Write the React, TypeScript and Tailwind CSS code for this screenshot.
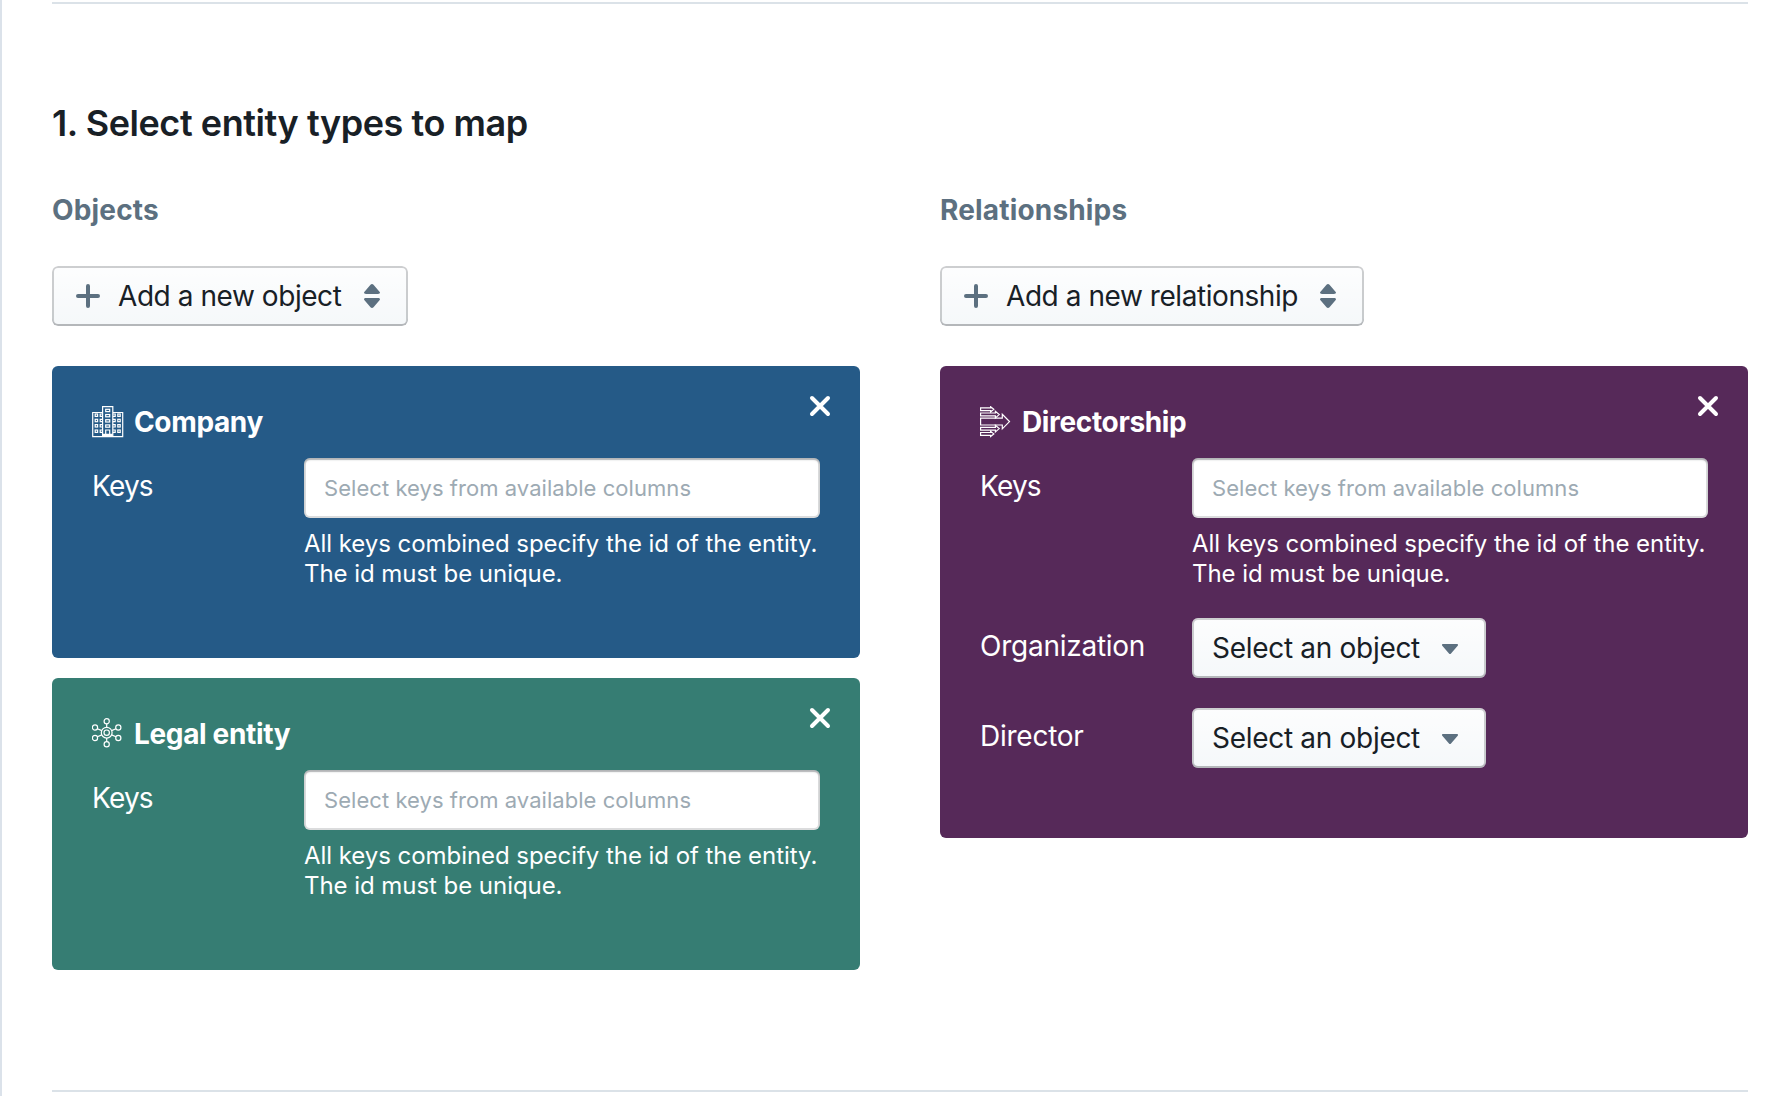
import type { ReactNode } from "react";

const buttonLook =
  "flex h-[60px] items-center rounded-[6px] bg-[#f5f8fa] bg-linear-to-b from-white/80 to-white/0 text-[28px] leading-[36px] text-[#182026] shadow-[inset_0_0_0_2px_rgba(16,22,26,0.2),inset_0_-2px_0_rgba(16,22,26,0.1)]";

function PlusIcon() {
  return (
    <svg className="h-8 w-8 shrink-0" viewBox="0 0 32 32" fill="none" stroke="#5c7080" strokeWidth="4" strokeLinecap="round">
      <path d="M16 6v20M6 16h20" />
    </svg>
  );
}

function DoubleCaretIcon() {
  return (
    <svg className="h-8 w-8 shrink-0" viewBox="0 0 32 32" fill="#5c7080">
      <path d="M10 14h12c1.1 0 2-.5 2-1.2 0-.4-.2-.8-.5-1.1l-6-7c-.8-.9-2.2-.9-3 0l-6 7c-.3.3-.5.7-.5 1.1 0 .7.9 1.2 2 1.2zM10 18h12c1.1 0 2 .5 2 1.2 0 .4-.2.8-.5 1.1l-6 7c-.8.9-2.2.9-3 0l-6-7c-.3-.3-.5-.7-.5-1.1 0-.7.9-1.2 2-1.2z" />
    </svg>
  );
}

function CaretDownIcon() {
  return (
    <svg className="h-8 w-8 shrink-0" viewBox="0 0 32 32" fill="#5c7080">
      <path d="M24 13c0-.6-.5-1-1-1H9c-.6 0-1 .4-1 1 0 .3.1.5.3.7l6.9 8c.2.2.5.4.8.4s.6-.2.8-.4l6.9-8c.2-.2.3-.4.3-.7z" />
    </svg>
  );
}

function BuildingIcon() {
  const rows = [8, 13.3, 18.6, 24];
  return (
    <svg className="h-8 w-8 shrink-0" viewBox="0 0 32 32" fill="none" stroke="white" strokeWidth="1.2">
      <path d="M10.6 6.5H.7v24.200h30V6.500h-9.900M10.600 30.700V.7h10.200v30" />
      {rows.map((y) => (
        <g key={y}>
          <rect x="3.200" y={y} width="2.400" height="2.400" />
          <path d={`M10.600 ${y}H8.200v2.400h2.400M20.800 ${y}h2.400v2.400h-2.400`} />
          <rect x="25.800" y={y} width="2.400" height="2.400" />
        </g>
      ))}
      <rect x="13.700" y="3.300" width="4" height="2.300" />
      <rect x="13.700" y="8.500" width="4" height="2.300" />
      <rect x="13.700" y="13.700" width="4" height="2.300" />
      <rect x="13.700" y="18.900" width="4" height="2.300" />
      <path d="M13.700 28v-4h4v4M10.600 28.300h10.200M10.600 29.600h10.200" />
    </svg>
  );
}

function NetworkIcon() {
  const nodes = [
    [14.7, 3.2],
    [26.3, 9.5],
    [26.3, 20],
    [14.7, 26.3],
    [3, 20],
    [3, 9.5],
  ];
  return (
    <svg className="h-8 w-8 shrink-0" viewBox="0 0 32 32" fill="none" stroke="white" strokeWidth="1.2">
      <circle cx="14.7" cy="14.7" r="5.4" />
      <circle cx="14.7" cy="14.7" r="2.7" />
      {nodes.map(([x, y]) => (
        <circle key={`${x}-${y}`} cx={x} cy={y} r="2.6" />
      ))}
      <path d="M14.7 5.800v3.500M14.700 20.100v3.600M24 10.700l-4.400 1.900M24 18.800l-4.400-1.900M5.400 10.700l4.400 1.900M5.400 18.800l4.400-1.900" />
    </svg>
  );
}

function ArrowsIcon() {
  return (
    <svg className="h-8 w-8 shrink-0" viewBox="0 0 32 32" fill="none" stroke="white" strokeWidth="1.2">
      <path d="M.6 12.200h21.700V8.300l7.200 7.300-7.200 7.300v-3.900H.6z" />
      <path d="M.6 1.900h10V.700l3.200 2.600-3.200 2.600V4.700H.6z" />
      <path d="M.6 7h14.800V5.300l3.800 3.300-3.800 3.300V9.800H.6z" />
      <path d="M.6 21.400h14.800v-2.100l3.800 3.300-3.800 3.300v-1.700H.6z" />
      <path d="M.6 26.500h10v-1.200l3.200 2.600-3.200 2.600v-1.200H.6z" />
    </svg>
  );
}

function CloseButton() {
  return (
    <button aria-label="Remove" className="absolute top-6 right-6 flex h-8 w-8 items-center justify-center">
      <svg className="h-8 w-8" viewBox="0 0 32 32" fill="none" stroke="white" strokeWidth="4" strokeLinecap="round">
        <path d="M8 8l16 16M24 8L8 24" />
      </svg>
    </button>
  );
}

function AddButton({ label, size }: { label: string; size: string }) {
  return (
    <button className={`${buttonLook} ${size} justify-between px-[20px]`}>
      <PlusIcon />
      <span className="ml-[14px] flex-1 text-left tracking-[-0.44px] whitespace-nowrap">{label}</span>
      <DoubleCaretIcon />
    </button>
  );
}

function Row({ label, tracking, children }: { label: string; tracking: string; children: ReactNode }) {
  return (
    <div className="mb-[30px] flex items-start">
      <div className={`w-[212px] shrink-0 pt-[10px] text-[28px] leading-[36px] ${tracking}`}>{label}</div>
      <div className="flex-1">{children}</div>
    </div>
  );
}

function KeysRow() {
  return (
    <Row label="Keys" tracking="tracking-[-0.8px]">
      <div className="flex h-[60px] items-center rounded-[6px] bg-white px-[20px] text-[22px] tracking-[0.05px] whitespace-nowrap text-[#9daab3] shadow-[inset_0_0_0_2px_rgba(16,22,26,0.15),inset_0_2px_2px_rgba(16,22,26,0.2)]">
        Select keys from available columns
      </div>
      <p className="mt-[11px] mb-[-1px] text-[24px] leading-[30px] tracking-[-0.05px] whitespace-nowrap">
        All keys combined specify the id of the entity.
        <br />
        The id must be unique.
      </p>
    </Row>
  );
}

function SelectRow({ label }: { label: string }) {
  return (
    <Row label={label} tracking="tracking-[-0.25px]">
      <button className={`${buttonLook} w-[294px] justify-between px-[20px]`}>
        <span className="tracking-[-0.3px] whitespace-nowrap">Select an object</span>
        <CaretDownIcon />
      </button>
    </Row>
  );
}

function Card({ color, icon, title, children }: { color: string; icon: ReactNode; title: string; children: ReactNode }) {
  return (
    <section className={`relative rounded-[6px] px-[40px] pt-[38px] pb-[40px] text-white ${color}`}>
      <CloseButton />
      <h4 className="mb-[18px] flex h-[36px] items-center gap-[10px] text-[28px] leading-[36px] font-bold tracking-[-0.35px]">
        {icon}
        <span>{title}</span>
      </h4>
      {children}
    </section>
  );
}

function ColumnTitle({ children }: { children: ReactNode }) {
  return (
    <h3 className="mb-[39px] text-[28px] leading-[34px] font-bold tracking-[0.17px] text-[#5c7080]">{children}</h3>
  );
}

export default function App() {
  return (
    <main className="h-[1096px] overflow-hidden border-l-2 border-[#dbe2ea] bg-white pt-[2px] pr-[38px] pl-[50px] font-['Inter',sans-serif] text-[#182026]">
      <div className="flex h-[1090px] flex-col border-y-2 border-[#dbe2e8] pt-[99px]">
        <h2 className="text-[36px] leading-[40px] font-semibold tracking-[-0.44px]">1. Select entity types to map</h2>
        <div className="mt-[50px] grid grid-cols-2 gap-[80px]">
          <div>
            <ColumnTitle>Objects</ColumnTitle>
            <AddButton label="Add a new object" size="w-[356px]" />
            <div className="mt-[40px] flex flex-col gap-[20px]">
              <Card color="bg-[#255a87]" icon={<BuildingIcon />} title="Company">
                <KeysRow />
              </Card>
              <Card color="bg-[#367d73]" icon={<NetworkIcon />} title="Legal entity">
                <KeysRow />
              </Card>
            </div>
          </div>
          <div>
            <ColumnTitle>Relationships</ColumnTitle>
            <AddButton label="Add a new relationship" size="w-[424px]" />
            <div className="mt-[40px]">
              <Card color="bg-[#562959]" icon={<ArrowsIcon />} title="Directorship">
                <KeysRow />
                <SelectRow label="Organization" />
                <SelectRow label="Director" />
              </Card>
            </div>
          </div>
        </div>
      </div>
    </main>
  );
}
